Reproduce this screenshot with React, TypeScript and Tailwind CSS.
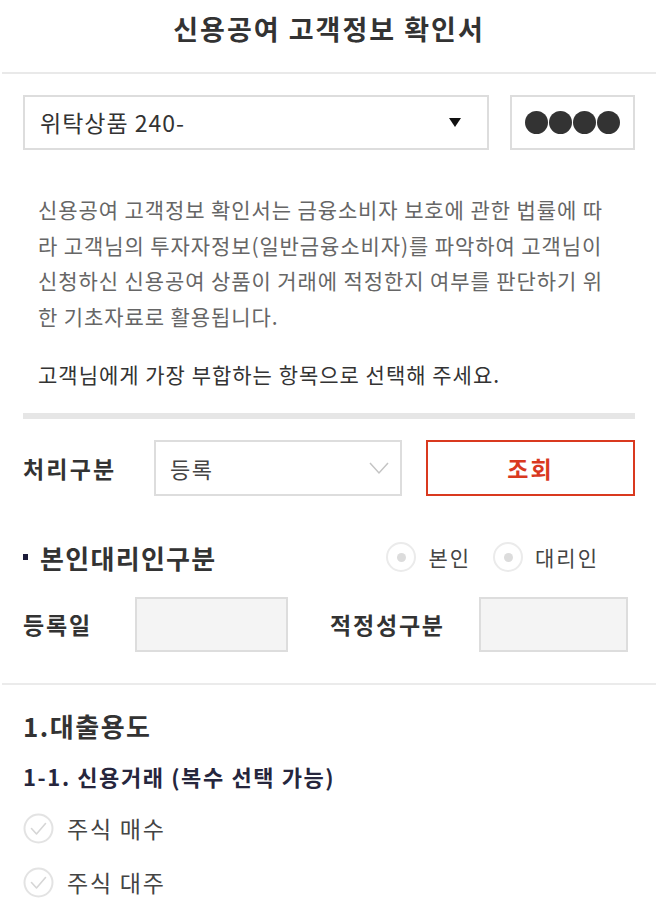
import React from "react";

const font = { fontFamily: '"Noto Sans CJK KR", "Noto Sans", sans-serif' };

function CheckCircle() {
  return (
    <svg width="31" height="31" viewBox="0 0 31 31" className="shrink-0">
      <circle cx="15.5" cy="15.5" r="14" fill="none" stroke="#e3e3e3" strokeWidth="2" />
      <path d="M8.5 15.5 L13.5 21 L22.5 10.5" fill="none" stroke="#d6d6d6" strokeWidth="1.6" strokeLinecap="round" strokeLinejoin="round" />
    </svg>
  );
}

function Radio({ label }: { label: string }) {
  return (
    <div className="flex items-center">
      <div className="w-[30px] h-[30px] rounded-full border-2 border-[#ebebeb] flex items-center justify-center">
        <div className="w-[9px] h-[9px] rounded-full bg-[#dcdcdc]" />
      </div>
      <span className="ml-[12px] text-[21px] text-[#444] leading-none tracking-[2px]">{label}</span>
    </div>
  );
}

export default function App() {
  return (
    <div className="w-[658px] min-h-[914px] bg-white overflow-hidden" style={font}>
      <div className="h-[72px] flex items-center justify-center">
        <h1 className="text-[27px] font-bold text-[#333] tracking-[2px] -mt-[14px]">신용공여 고객정보 확인서</h1>
      </div>
      <div className="mx-[2px] h-[2px] bg-[#e9e9e9]" />

      <div className="px-[23px]">
        <div className="mt-[21px] flex gap-[21px]">
          <div className="w-[466px] h-[55px] border-2 border-[#dddddd] flex items-center justify-between pl-[15px] pr-[26px]">
            <span className="text-[23px] text-[#333] tracking-[1px]">위탁상품 240-</span>
            <svg width="12" height="9" viewBox="0 0 12 9"><path d="M0 0 H12 L6 9 Z" fill="#111" /></svg>
          </div>
          <div className="w-[125px] h-[55px] border-2 border-[#dddddd] flex items-center justify-center gap-[1px]">
            <span className="w-[23px] h-[23px] rounded-full bg-[#333]" />
            <span className="w-[23px] h-[23px] rounded-full bg-[#333]" />
            <span className="w-[23px] h-[23px] rounded-full bg-[#333]" />
            <span className="w-[23px] h-[23px] rounded-full bg-[#333]" />
          </div>
        </div>

        <p className="mt-[42px] pl-[15px] text-[21px] leading-[35.5px] text-[#666] tracking-[0.9px] whitespace-nowrap">
          신용공여 고객정보 확인서는 금융소비자 보호에 관한 법률에 따<br />
          라 고객님의 투자자정보(일반금융소비자)를 파악하여 고객님이<br />
          신청하신 신용공여 상품이 거래에 적정한지 여부를 판단하기 위<br />
          한 기초자료로 활용됩니다.
        </p>
        <p className="mt-[22px] pl-[15px] text-[21px] leading-[36px] text-[#333] tracking-[1px] whitespace-nowrap">고객님에게 가장 부합하는 항목으로 선택해 주세요.</p>

        <div className="mt-[21px] h-[6px] bg-[#e6e6e6]" />

        <div className="mt-[21px] h-[56px] flex items-center">
          <span className="w-[131px] text-[23px] font-semibold text-[#333] tracking-[2.2px]">처리구분</span>
          <div className="w-[248px] h-[56px] border-2 border-[#dddddd] flex items-center justify-between pl-[14px] pr-[10px]">
            <span className="text-[22px] text-[#444] tracking-[1.5px]">등록</span>
            <svg width="22" height="14" viewBox="0 0 22 14"><path d="M2 2 L11 12 L20 2" fill="none" stroke="#c4c4c4" strokeWidth="1.5" /></svg>
          </div>
          <button className="ml-[24px] w-[209px] h-[56px] border-2 border-[#d9391f] text-[#d9391f] text-[23px] font-bold tracking-[2px] flex items-center justify-center">조회</button>
        </div>

        <div className="mt-[46px] h-[30px] flex items-center justify-between">
          <div className="flex items-center">
            <span className="w-[5px] h-[6px] bg-[#1d1d3a] mr-[12px]" />
            <span className="text-[26px] font-bold text-[#333] tracking-[1.3px]">본인대리인구분</span>
          </div>
          <div className="flex items-center gap-[22px] mr-[36px]">
            <Radio label="본인" />
            <Radio label="대리인" />
          </div>
        </div>

        <div className="mt-[25px] h-[55px] flex items-center">
          <span className="w-[112px] text-[23px] font-semibold text-[#333] tracking-[1.8px]">등록일</span>
          <div className="w-[153px] h-[55px] border-2 border-[#dddddd] bg-[#f4f4f4]" />
          <span className="ml-[42px] w-[149px] text-[23px] font-semibold text-[#333] tracking-[1.8px]">적정성구분</span>
          <div className="w-[149px] h-[55px] border-2 border-[#dddddd] bg-[#f4f4f4]" />
        </div>
      </div>

      <div className="mt-[31px] mx-[2px] h-[2px] bg-[#ebebeb]" />

      <div className="px-[23px]">
        <div className="mt-[22px] h-[36px] flex items-center">
          <span className="text-[26px] font-bold text-[#333] tracking-[1.5px]">1.대출용도</span>
        </div>
        <div className="mt-[16px] h-[34px] flex items-center">
          <span className="text-[22px] font-bold text-[#26263d] tracking-[1.6px]">1-1. 신용거래 (복수 선택 가능)</span>
        </div>
        <div className="mt-[18px] h-[34px] flex items-center">
          <CheckCircle />
          <span className="ml-[13px] text-[23px] text-[#444] tracking-[1.8px]">주식 매수</span>
        </div>
        <div className="mt-[20px] h-[34px] flex items-center">
          <CheckCircle />
          <span className="ml-[13px] text-[23px] text-[#444] tracking-[1.8px]">주식 대주</span>
        </div>
      </div>
    </div>
  );
}
